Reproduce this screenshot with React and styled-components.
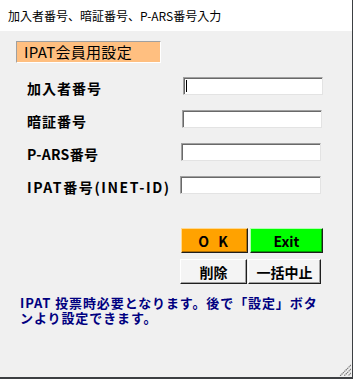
import React from "react";
import styled, { createGlobalStyle } from "styled-components";

const Global = createGlobalStyle`
  html, body {
    margin: 0;
    padding: 0;
    background: #f0f0f0;
  }
  * {
    box-sizing: border-box;
  }
`;

const Window = styled.div`
  position: relative;
  width: 353px;
  height: 379px;
  display: flex;
  flex-direction: column;
  border-right: 1px solid #3c3f42;
  border-bottom: 2px solid #3c3f42;
  font-family: "Noto Sans CJK JP", "Noto Sans", sans-serif;
  color: #000;
  overflow: hidden;
`;

const TitleBar = styled.div`
  height: 31px;
  flex-shrink: 0;
  display: flex;
  align-items: center;
  padding-left: 8px;
  background: #ffffff;
  font-size: 12px;
  color: #000;
`;

const Body = styled.div`
  flex: 1;
  display: flex;
  flex-direction: column;
  background: #f0f0f0;
`;

const SectionBox = styled.div`
  margin: 10px 0 0 16px;
  width: 145px;
  height: 22px;
  padding-left: 7px;
  background: #ffbf80;
  border: 1px solid;
  border-color: #a0a0a0 #ffffff #ffffff #a0a0a0;
  font-size: 15px;
  line-height: 19px;
  letter-spacing: 0.3px;
`;

const Form = styled.div`
  margin-top: 14px;
  display: flex;
  flex-direction: column;
  gap: 15px;
`;

const Row = styled.div`
  display: flex;
  align-items: center;
  height: 18px;
  padding-left: 27px;
`;

const Label = styled.div`
  width: 156px;
  padding-top: 3px;
  font-size: 14px;
  line-height: 18px;
  font-weight: bold;
  letter-spacing: ${(p) => p.$spacing}px;
  white-space: nowrap;
`;

const InputWrap = styled.div`
  position: relative;
  margin-left: ${(p) => -p.$shift}px;
  width: ${(p) => p.$width}px;
  height: 18px;
`;

const Field = styled.input`
  display: block;
  width: 100%;
  height: 100%;
  margin: 0;
  padding: 0 3px;
  background: #ffffff;
  border: 1px solid;
  border-color: #a0a0a0 #e3e3e3 #e3e3e3 #a0a0a0;
  box-shadow: inset 1px 1px 0 #696969;
  outline: none;
  font-size: 12px;
`;

const Caret = styled.span`
  position: absolute;
  left: 3px;
  top: 3px;
  width: 1px;
  height: 12px;
  background: #000;
`;

const ButtonRow = styled.div`
  display: flex;
  padding-left: ${(p) => p.$left}px;
  gap: ${(p) => p.$gap}px;
  margin-top: ${(p) => p.$top}px;
`;

const Button = styled.button`
  width: ${(p) => p.$width}px;
  height: 25px;
  margin: 0;
  padding: 0;
  background: ${(p) => p.$bg};
  border: 1px solid;
  border-color: ${(p) => p.$light} #1e1e1e #1e1e1e ${(p) => p.$light};
  box-shadow: inset -1px -1px 0 ${(p) => p.$shade};
  font-family: "Noto Sans CJK JP", "Noto Sans", sans-serif;
  font-size: 14px;
  font-weight: bold;
  color: #000;
  letter-spacing: ${(p) => p.$spacing || 0}px;
  line-height: 20px;
`;

const Note = styled.div`
  margin: 11px 0 0 20px;
  display: flex;
  flex-direction: column;
  font-size: 13px;
  font-weight: bold;
  color: #000080;
  letter-spacing: 0.9px;
`;

const NoteLine = styled.div`
  height: 15px;
  line-height: 15px;
  white-space: nowrap;
`;

const Grip = styled.svg`
  position: absolute;
  right: 1px;
  bottom: 1px;
`;

const fields = [
  { label: "加入者番号", spacing: 1, shift: 0, width: 140, caret: true },
  { label: "暗証番号", spacing: 1, shift: 1, width: 140 },
  { label: "P-ARS番号", spacing: 0.3, shift: 2, width: 140 },
  { label: "IPAT番号(INET-ID)", spacing: 1.6, shift: 3, width: 141 },
];

const App = () => {
  return (
    <>
      <Global />
      <Window>
        <TitleBar>加入者番号、暗証番号、P-ARS番号入力</TitleBar>
        <Body>
          <SectionBox>IPAT会員用設定</SectionBox>
          <Form>
            {fields.map((f) => (
              <Row key={f.label}>
                <Label $spacing={f.spacing}>{f.label}</Label>
                <InputWrap $shift={f.shift} $width={f.width}>
                  <Field type="text" readOnly />
                  {f.caret && <Caret />}
                </InputWrap>
              </Row>
            ))}
          </Form>
          <ButtonRow $left={181} $gap={2} $top={34}>
            <Button
              $width={67}
              $bg="#ffa200"
              $light="#ffd890"
              $shade="#b06e00"
              $spacing={3}
            >
              O K
            </Button>
            <Button $width={73} $bg="#00ff00" $light="#b0ffb0" $shade="#00a000">
              Exit
            </Button>
          </ButtonRow>
          <ButtonRow $left={180} $gap={1} $top={6}>
            <Button $width={67} $bg="#f4f4f4" $light="#ffffff" $shade="#a0a0a0">
              削除
            </Button>
            <Button $width={73} $bg="#f4f4f4" $light="#ffffff" $shade="#a0a0a0">
              一括中止
            </Button>
          </ButtonRow>
          <Note>
            <NoteLine>IPAT 投票時必要となります。後で「設定」ボタ</NoteLine>
            <NoteLine>ンより設定できます。</NoteLine>
          </Note>
        </Body>
        <Grip width="12" height="12" viewBox="0 0 12 12">
          <g stroke="#7a7a7a" strokeWidth="1.2" strokeDasharray="1.4 0.6">
            <line x1="12" y1="1" x2="1" y2="12" />
            <line x1="12" y1="5" x2="5" y2="12" />
            <line x1="12" y1="9" x2="9" y2="12" />
          </g>
        </Grip>
      </Window>
    </>
  );
};

export default App;
